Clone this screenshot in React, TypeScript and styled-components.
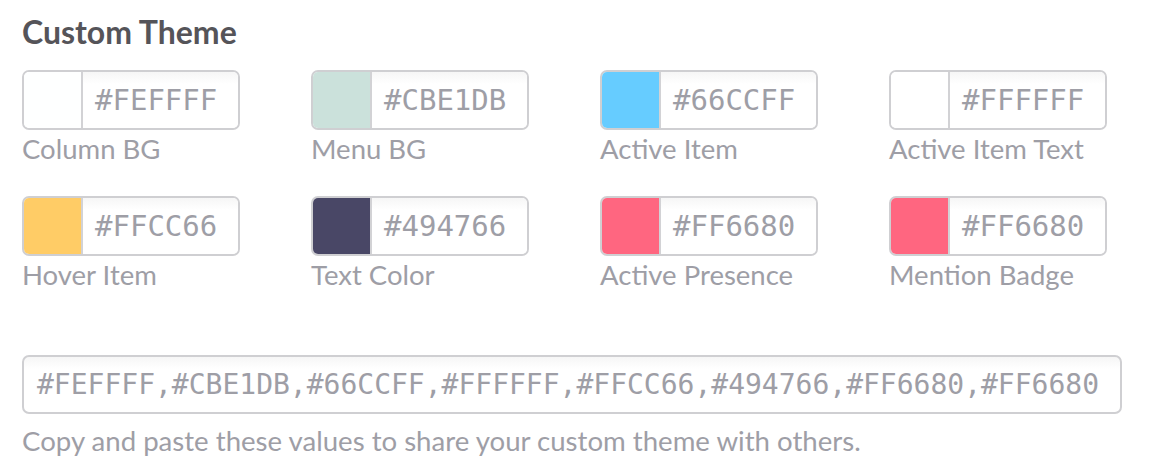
import React from 'react'
import styled, {createGlobalStyle} from "styled-components";

const GlobalStyle = createGlobalStyle`
  html, body {
    margin: 0;
    padding: 0;
    background: #ffffff;
  }
  body {
    font-family: Lato, "Open Sans", sans-serif;
  }
`

const Section = styled.section`
  padding: 12px 22px 0 22px;
`
const Title = styled.h2`
  margin: 0 0 18px 0;
  font-size: 32px;
  font-weight: 700;
  color: #555459;
  line-height: 40px;
`
const Grid = styled.div`
  display: grid;
  grid-template-columns: repeat(4, 218px);
  column-gap: 71px;
  row-gap: 29px;
`
const Field = styled.div`
  display: flex;
  flex-direction: column;
`
const Picker = styled.div`
  display: flex;
  width: 218px;
  height: 60px;
  box-sizing: border-box;
  border: 2px solid #cfcfd2;
  border-radius: 7px;
  overflow: hidden;
  background: #ffffff;
`
const Swatch = styled.div<{ $color: string }>`
  width: 57px;
  flex: none;
  background: ${p => p.$color};
  border-right: 2px solid #d2d2d5;
`
const HexValue = styled.div`
  flex: 1;
  display: flex;
  align-items: center;
  padding-left: 12px;
  font-family: "DejaVu Sans Mono", "Liberation Mono", monospace;
  font-size: 29px;
  color: #9e9ea6;
  background: linear-gradient(#f6f6f6, #ffffff 12px);
`
const Label = styled.div`
  font-size: 27.5px;
  line-height: 36px;
  color: #9e9ea6;
  margin-top: 1px;
`
const ThemeString = styled.div`
  margin-top: 62px;
  height: 59px;
  box-sizing: border-box;
  border: 2px solid #cfcfd2;
  border-radius: 7px;
  display: flex;
  align-items: center;
  padding-left: 13px;
  font-family: "DejaVu Sans Mono", "Liberation Mono", monospace;
  font-size: 28px;
  color: #9e9ea6;
  background: linear-gradient(#f6f6f6, #ffffff 12px);
  width: 1100px;
`
const Hint = styled.p`
  margin: 10px 0 0 0;
  font-size: 27.6px;
  line-height: 34px;
  color: #9e9ea6;
`

const colors = [
    {label: "Column BG", value: "#FEFFFF"},
    {label: "Menu BG", value: "#CBE1DB"},
    {label: "Active Item", value: "#66CCFF"},
    {label: "Active Item Text", value: "#FFFFFF"},
    {label: "Hover Item", value: "#FFCC66"},
    {label: "Text Color", value: "#494766"},
    {label: "Active Presence", value: "#FF6680"},
    {label: "Mention Badge", value: "#FF6680"},
]

const App = () => {
    return (
        <>
            <GlobalStyle/>
            <Section>
                <Title>Custom Theme</Title>
                <Grid>
                    {colors.map(item =>
                        <Field key={item.label}>
                            <Picker>
                                <Swatch $color={item.value}/>
                                <HexValue>{item.value}</HexValue>
                            </Picker>
                            <Label>{item.label}</Label>
                        </Field>
                    )}
                </Grid>
                <ThemeString>{colors.map(c => c.value).join(",")}</ThemeString>
                <Hint>Copy and paste these values to share your custom theme with others.</Hint>
            </Section>
        </>
    )
}

export default App
